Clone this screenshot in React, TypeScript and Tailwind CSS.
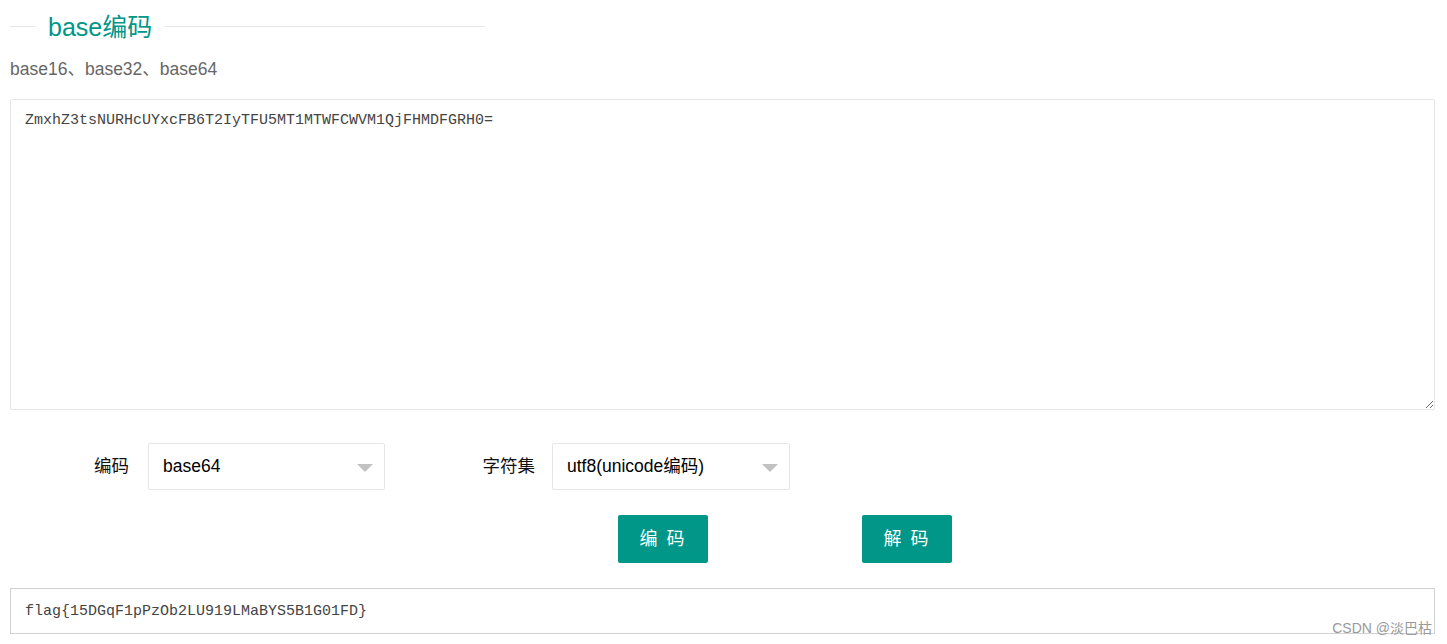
import React from 'react';

const sans = { fontFamily: '"Liberation Sans", "Noto Sans CJK SC", sans-serif' };
const mono = { fontFamily: '"Liberation Mono", "Noto Sans CJK SC", monospace' };

const SelectBox = ({ value, width }: { value: string; width: string }) => (
  <div className={`relative flex items-center h-[47px] ${width} border border-[#e6e6e6] rounded-[2px] bg-white pl-[14px] text-[17.5px] text-[#000]`}>
    <span>{value}</span>
    <span className="absolute right-[11px] top-[20px] w-0 h-0 border-l-[8px] border-r-[8px] border-t-[8px] border-l-transparent border-r-transparent border-t-[#c2c2c2]" />
  </div>
);

const App = () => {
  return (
    <div className="relative w-full h-[644px] overflow-hidden bg-white" style={sans}>
      {/* fieldset title */}
      <div className="flex items-center h-[52px] ml-[10px] w-[475px]">
        <div className="w-[25px] h-px bg-[#e6e6e6]" />
        <span className="px-[13px] pt-[3px] text-[25px] text-[#009688] leading-none">base编码</span>
        <div className="flex-1 h-px bg-[#e6e6e6]" />
      </div>

      <div className="h-[34px] flex items-center pl-[10px] text-[17.5px] text-[#666]">base16、base32、base64</div>

      <textarea
        readOnly
        defaultValue="ZmxhZ3tsNURHcUYxcFB6T2IyTFU5MT1MTWFCWVM1QjFHMDFGRH0="
        className="block mt-[13px] ml-[10px] w-[1425px] h-[311px] border border-[#e6e6e6] rounded-[2px] pt-[11px] pl-[14px] text-[15px] leading-[20px] text-[#444] outline-none"
        style={mono}
      />

      {/* options */}
      <div className="flex items-center mt-[33px] pl-[10px]">
        <label className="w-[119px] text-right text-[17.5px] text-[#111]">编码</label>
        <div className="ml-[19px]">
          <SelectBox value="base64" width="w-[237px]" />
        </div>
        <label className="w-[150px] text-right text-[17.5px] text-[#111]">字符集</label>
        <div className="ml-[17px]">
          <SelectBox value="utf8(unicode编码)" width="w-[238px]" />
        </div>
      </div>

      {/* actions */}
      <div className="flex mt-[25px] ml-[618px] gap-[154px]">
        <button className="w-[90px] h-[48px] bg-[#009688] text-white text-[18px] tracking-[2px] rounded-[2px]">编 码</button>
        <button className="w-[90px] h-[48px] bg-[#009688] text-white text-[18px] tracking-[2px] rounded-[2px]">解 码</button>
      </div>

      {/* result */}
      <div
        className="flex items-center mt-[25px] ml-[10px] w-[1425px] h-[46px] border border-[#d2d2d2] pl-[14px] pt-[3px] text-[15px] text-[#444]"
        style={mono}
      >
        flag{'{'}15DGqF1pPzOb2LU919LMaBYS5B1G01FD{'}'}
      </div>

      <div className="absolute right-[15px] bottom-[9px] text-[14px] text-[#999] leading-none">CSDN @淡巴枯</div>
    </div>
  );
};

export default App;
